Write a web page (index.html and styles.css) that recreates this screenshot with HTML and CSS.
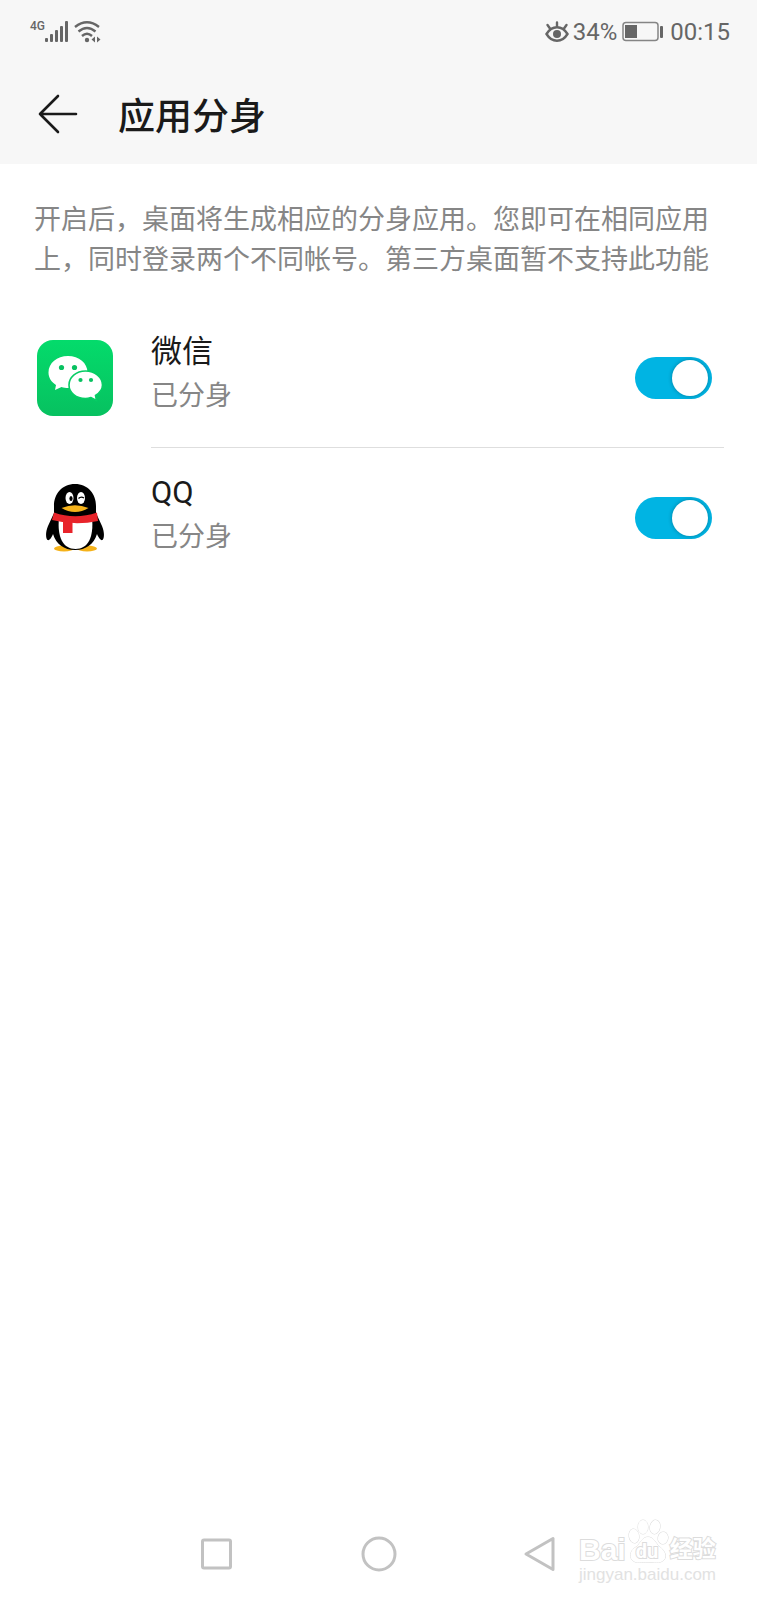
FILE: index.html
```
<!DOCTYPE html>
<html lang="zh-CN">
<head>
    <meta charset="UTF-8">
    <meta name="viewport" content="width=device-width, initial-scale=1.0">
    <title>应用分身</title>
    <link rel="stylesheet" href="styles.css">
</head>
<body>
    <header class="top">
        <div class="status-bar">
            <div class="status-group">
                <span class="network">4G</span>
                <svg class="signal" width="24" height="24" viewBox="0 0 24 24" fill="#666">
                    <rect x="0" y="18" width="3" height="4" rx="1"/>
                    <rect x="5" y="14" width="3" height="8" rx="1"/>
                    <rect x="10" y="10" width="3" height="12" rx="1"/>
                    <rect x="15" y="6" width="3" height="16" rx="1"/>
                    <rect x="20" y="1" width="3" height="21" rx="1"/>
                </svg>
                <svg class="wifi" width="28" height="24" viewBox="0 0 28 24" fill="none" stroke="#666" stroke-width="2.4">
                    <path d="M1 7Q13 -2.500 25 7"/>
                    <path d="M4.500 11.500Q13 4.500 21.500 11.500"/>
                    <path d="M8 16Q13 11.500 18 16"/>
                    <circle cx="13" cy="20" r="2.200" fill="#666" stroke="none"/>
                    <path d="M21 16.500v6l-3.500-3zM23 16.500v6l3.500-3z" fill="#666" stroke="none"/>
                </svg>
            </div>
            <div class="status-group">
                <svg width="24" height="24" viewBox="0 0 24 24" fill="none" stroke="#666" stroke-width="2.400" stroke-linecap="round">
                    <path d="M1.500 14C7 5 17 5 22.500 14C17 23 7 23 1.500 14z"/>
                    <path d="M12 6.500V2.500M5 8.500L2.500 5M19 8.500L21.500 5"/>
                    <circle cx="12" cy="14" r="4" fill="#666" stroke="none"/>
                </svg>
                <span class="battery-text">34%</span>
                <svg class="battery" width="42" height="24" viewBox="0 0 42 24">
                    <rect x="1" y="2.500" width="35" height="18" rx="3" fill="none" stroke="#858585" stroke-width="1.500"/>
                    <rect x="3" y="5" width="12" height="13" fill="#666"/>
                    <rect x="38" y="6" width="3" height="12" rx="1" fill="#666"/>
                </svg>
                <span class="clock">00:15</span>
            </div>
        </div>
        <div class="title-bar">
            <button type="button" class="back" aria-label="返回">
                <svg width="40" height="40" viewBox="0 0 40 40" fill="none" stroke="#1a1a1a" stroke-width="2.600" stroke-linecap="round" stroke-linejoin="round">
                    <path d="M38 20H2M20 2L2 20L20 38"/>
                </svg>
            </button>
            <h1>应用分身</h1>
        </div>
    </header>

    <main>
        <p class="intro">开启后，桌面将生成相应的分身应用。您即可在相同应用上，同时登录两个不同帐号。第三方桌面暂不支持此功能</p>

        <ul class="app-list">
            <li class="app">
                <svg class="app-icon" width="76" height="76" viewBox="0 0 76 76">
                    <defs>
                        <linearGradient id="green" x1="0" y1="0" x2="0" y2="1">
                            <stop offset="0" stop-color="#04db6b"/>
                            <stop offset="1" stop-color="#07c160"/>
                        </linearGradient>
                    </defs>
                    <rect width="76" height="76" rx="16" fill="url(#green)"/>
                    <path d="M31 16C20 16 11.500 23 11.500 32.500C11.500 38 14.500 42 19 45L18 50L24.500 47C26.500 47.800 29 48 31 48C42 48 50.500 41 50.500 32.500C50.500 23 42 16 31 16z" fill="#fff"/>
                    <path d="M48.500 31C39 31 32 37.500 32 45C32 52.500 39 58.500 48.500 58.500C50.500 58.500 52.500 58 54 57.500L59.500 60.500L58.500 55.500C62.500 53 65.500 49.500 65.500 45C65.500 37.500 58 31 48.500 31z" fill="#fff" stroke="#07cd65" stroke-width="1.600"/>
                    <g fill="#08c160">
                        <circle cx="24.500" cy="27.500" r="2.600"/>
                        <circle cx="37.500" cy="27.500" r="2.600"/>
                        <circle cx="43.500" cy="40" r="2.100"/>
                        <circle cx="54" cy="40" r="2.100"/>
                    </g>
                </svg>
                <div class="app-body">
                    <label class="app-text" for="wechat">
                        <span class="app-name">微信</span>
                        <span class="app-state">已分身</span>
                    </label>
                    <input type="checkbox" class="switch" id="wechat" checked>
                </div>
            </li>
            <li class="app">
                <svg class="app-icon" width="76" height="76" viewBox="0 0 76 76">
                    <ellipse cx="27" cy="68.500" rx="10" ry="3" fill="#f5b21a"/>
                    <ellipse cx="50" cy="68.500" rx="10" ry="3" fill="#f5b21a"/>
                    <path d="M38 4C25 4 17 14 17 26V33L11 46C8 53 9 59 10.500 60C12.500 61 15 57 16 54C19 64 27 70 38 70C49 70 57 64 60 54C61 57 64 61 65.500 60C67 59 68 53 65 46L59 33V26C59 14 51 4 38 4z" fill="#000"/>
                    <path d="M22 38C20 57 26 69 38.500 69C51 69 57 57 55 38z" fill="#fff"/>
                    <path d="M17 32.500Q38 40 60 32.500L61 41Q38 46 15 40z" fill="#e8232a"/>
                    <path d="M26 41H35.500V53H26z" fill="#e8232a"/>
                    <path d="M24.500 28Q38 22.500 51.500 28Q45 32 38 32Q31 32 24.500 28z" fill="#f5b21a"/>
                    <ellipse cx="32.500" cy="18" rx="4" ry="6" fill="#fff"/>
                    <ellipse cx="44" cy="18" rx="4" ry="6" fill="#fff"/>
                    <ellipse cx="34" cy="18.500" rx="1.600" ry="2.600" fill="#000"/>
                    <path d="M41.500 18.500Q44 16 47 18" fill="none" stroke="#000" stroke-width="1.300"/>
                </svg>
                <div class="app-body">
                    <label class="app-text" for="qq">
                        <span class="app-name">QQ</span>
                        <span class="app-state">已分身</span>
                    </label>
                    <input type="checkbox" class="switch" id="qq" checked>
                </div>
            </li>
        </ul>
    </main>

    <nav class="nav-bar">
        <button type="button" aria-label="最近任务">
            <svg width="36" height="36" viewBox="0 0 36 36" fill="none" stroke="#c2c2c2" stroke-width="3">
                <rect x="3.500" y="4" width="28" height="28" rx="1.500"/>
            </svg>
        </button>
        <button type="button" aria-label="主屏幕">
            <svg width="36" height="36" viewBox="0 0 36 36" fill="none" stroke="#c2c2c2" stroke-width="3">
                <circle cx="18" cy="18" r="16"/>
            </svg>
        </button>
        <button type="button" aria-label="返回上一页">
            <svg width="36" height="36" viewBox="0 0 36 36" fill="none" stroke="#c2c2c2" stroke-width="3" stroke-linejoin="round">
                <path d="M30 2.500V33.500L3 18z"/>
            </svg>
        </button>
    </nav>

    <div class="watermark">
        <div class="brand">
            <span class="brand-bai">Bai</span>
            <span class="paw">
                <svg width="42" height="46" viewBox="0 0 42 46" fill="#fff" stroke="#dcdcdc" stroke-width="1">
                    <ellipse cx="7" cy="18" rx="5" ry="7" transform="rotate(-10 7 18)"/>
                    <ellipse cx="16" cy="9" rx="5" ry="7"/>
                    <ellipse cx="28" cy="9" rx="5" ry="7" transform="rotate(12 28 9)"/>
                    <ellipse cx="36" cy="20" rx="5" ry="6" transform="rotate(10 36 20)"/>
                    <path d="M21 19C27 19 28 25 33 29C38 33 40 38 37 42C33 46 26 44 21 44C15 44 9 46 5 42C2 37 4 32 9 29C14 25 15 19 21 19z"/>
                </svg>
                <span class="brand-du">du</span>
            </span>
            <span class="brand-name">经验</span>
        </div>
        <div class="site">jingyan.baidu.com</div>
    </div>
</body>
</html>
```

FILE: styles.css
```
* {
    box-sizing: border-box;
}
body {
    margin: 0;
    min-height: 100vh;
    display: flex;
    flex-direction: column;
    position: relative;
    background: #fff;
    color: #1a1a1a;
    font-family: Roboto, "Noto Sans CJK SC", sans-serif;
}
button {
    padding: 0;
    border: none;
    background: none;
    cursor: pointer;
}
svg {
    display: block;
}
.top {
    background: #f7f7f7;
}
.status-bar {
    display: flex;
    justify-content: space-between;
    align-items: center;
    height: 64px;
    padding: 0 27px 0 30px;
    color: #666;
    font-size: 24px;
}
.status-group {
    display: flex;
    align-items: center;
}
.network {
    align-self: flex-start;
    font-size: 12px;
    line-height: 12px;
    font-weight: 500;
}
.wifi {
    margin-left: 5px;
}
.battery-text {
    margin-left: 4px;
}
.battery {
    margin: 0 6px 0 5px;
}
.title-bar {
    display: flex;
    align-items: center;
    gap: 40px;
    height: 100px;
    padding: 0 38px;
}
h1 {
    margin: 0;
    padding-top: 8px;
    font-size: 37px;
    line-height: 48px;
    font-weight: 500;
}
.intro {
    margin: 36px 34px 28px;
    color: #868686;
    font-size: 27px;
    line-height: 40px;
}
.app-list {
    margin: 0;
    padding: 0;
    list-style: none;
}
.app {
    display: flex;
    align-items: center;
    gap: 38px;
    padding: 0 33px 0 37px;
}
.app-body {
    flex: 1;
    display: flex;
    align-items: center;
    justify-content: space-between;
    height: 140px;
    padding-right: 12px;
}
.app:not(:last-child) .app-body {
    border-bottom: 1px solid #dedede;
}
.app-text {
    display: flex;
    flex-direction: column;
    padding-bottom: 7px;
    line-height: 44px;
}
.app-name {
    font-size: 31px;
}
.app-state {
    color: #868686;
    font-size: 27px;
}
.switch {
    appearance: none;
    width: 77px;
    height: 42px;
    margin: 0;
    padding: 3px 4px;
    border-radius: 21px;
    background: #ccc;
    cursor: pointer;
}
.switch::before {
    content: "";
    display: block;
    width: 36px;
    height: 36px;
    border-radius: 50%;
    background: #fff;
    box-shadow: 0 0 4px rgba(0, 0, 0, 0.3);
}
.switch:checked {
    background: #00b4e3;
}
.switch:checked::before {
    margin-left: auto;
}
.nav-bar {
    display: flex;
    justify-content: center;
    align-items: center;
    gap: 126px;
    height: 92px;
    margin-top: auto;
}
.watermark {
    position: absolute;
    right: 41px;
    bottom: 14px;
    color: #fff;
    -webkit-text-stroke: 2px #dcdcdc;
    paint-order: stroke fill;
}
.brand {
    display: flex;
    align-items: flex-end;
    gap: 1px;
    height: 46px;
    line-height: 28px;
    font-weight: bold;
}
.brand-bai {
    font-family: "Liberation Sans", sans-serif;
    font-size: 30px;
}
.paw {
    position: relative;
}
.brand-du {
    position: absolute;
    left: 9px;
    bottom: 0;
    font-size: 20px;
    line-height: 26px;
}
.brand-name {
    font-size: 23px;
}
.site {
    color: #e2e2e2;
    font-family: "Liberation Sans", sans-serif;
    font-size: 17px;
    line-height: 22px;
    -webkit-text-stroke: 0;
}
```
